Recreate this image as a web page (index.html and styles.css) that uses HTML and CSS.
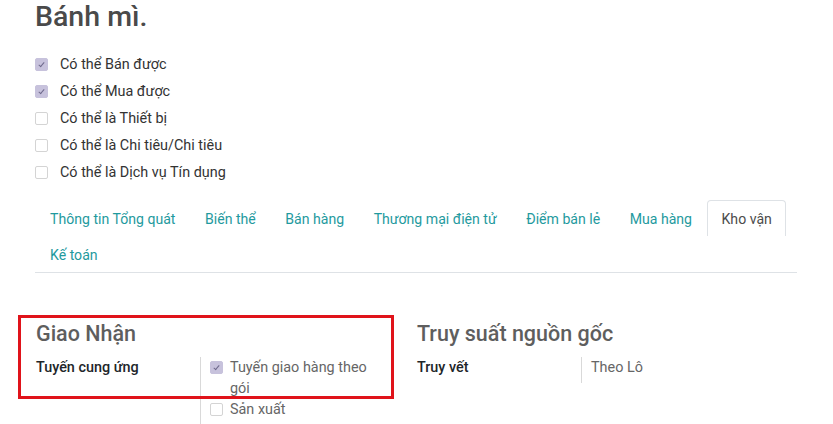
FILE: index.html
```html
<!DOCTYPE html>
<html lang="vi">
<head>
    <meta charset="UTF-8">
    <meta name="viewport" content="width=device-width, initial-scale=1.0">
    <title>Bánh mì.</title>
    <link rel="stylesheet" href="styles.css">
</head>
<body>
    <div class="sheet">
        <h1 class="product-name">Bánh mì.</h1>

        <ul class="options">
            <li><span class="check checked"></span>Có thể Bán được</li>
            <li><span class="check checked"></span>Có thể Mua được</li>
            <li><span class="check"></span>Có thể là Thiết bị</li>
            <li><span class="check"></span>Có thể là Chi tiêu/Chi tiêu</li>
            <li><span class="check"></span>Có thể là Dịch vụ Tín dụng</li>
        </ul>

        <ul class="tabs">
            <li>Thông tin Tổng quát</li>
            <li>Biến thể</li>
            <li>Bán hàng</li>
            <li>Thương mại điện tử</li>
            <li>Điểm bán lẻ</li>
            <li>Mua hàng</li>
            <li class="active">Kho vận</li>
            <li>Kế toán</li>
        </ul>

        <div class="groups">
            <div class="group">
                <h2>Giao Nhận</h2>
                <div class="field">
                    <div class="field-label">Tuyến cung ứng</div>
                    <div class="field-value">
                        <div class="route"><span class="check checked"></span><span>Tuyến giao hàng theo gói</span></div>
                        <div class="route"><span class="check"></span><span>Sản xuất</span></div>
                        <div class="route"><span class="check"></span></div>
                    </div>
                </div>
                <div class="highlight"></div>
            </div>
            <div class="group">
                <h2>Truy suất nguồn gốc</h2>
                <div class="field">
                    <div class="field-label">Truy vết</div>
                    <div class="field-value short">Theo Lô</div>
                </div>
            </div>
        </div>
    </div>
</body>
</html>
```

FILE: styles.css
```css
body {
    margin: 0;
    background: #fff;
    font-family: Roboto, "Noto Sans", sans-serif;
    font-size: 14.4px;
    color: #4c4c4c;
    overflow: hidden;
}
.sheet {
    padding: 0 36px 0 35px;
    width: 762px;
}
.product-name {
    margin: 0;
    font-size: 28.5px;
    font-weight: 500;
    line-height: 34px;
    color: #4a4a4a;
}
.options {
    list-style: none;
    margin: 17px 0 0;
    padding: 0;
}
.options li {
    display: flex;
    align-items: center;
    height: 27px;
    color: #333;
}
.check {
    flex: none;
    box-sizing: border-box;
    width: 13px;
    height: 13px;
    margin-right: 12px;
    border: 1px solid #d4d4d4;
    border-radius: 2px;
    background: #fff;
    position: relative;
}
.check.checked {
    border-color: #c7c2dc;
    background: #c7c2dc;
}
.check.checked::after {
    content: "";
    position: absolute;
    left: 4px;
    top: 2px;
    width: 2px;
    height: 5px;
    border: solid #6f6a8c;
    border-width: 0 1px 1px 0;
    transform: rotate(40deg);
}
.tabs {
    list-style: none;
    display: flex;
    flex-wrap: wrap;
    margin: 14px 0 0;
    padding: 0;
    border-bottom: 1px solid #dee2e6;
    font-size: 14.1px;
}
.tabs li {
    box-sizing: border-box;
    height: 36px;
    line-height: 36px;
    padding: 0 13.5px 0 14px;
    color: #1f9a9e;
    border: 1px solid transparent;
    border-bottom: 0;
    border-radius: 4px 4px 0 0;
}
.tabs li.active {
    color: #4c4c4c;
    border-color: #dee2e6;
    background: #fff;
}
.groups {
    display: grid;
    grid-template-columns: 381px 381px;
    margin-top: 43px;
}
.group {
    position: relative;
}
.group h2 {
    margin: 0 0 0 1px;
    font-size: 21.5px;
    font-weight: 500;
    line-height: 36px;
    color: #5e5e5e;
}
.field {
    display: flex;
    margin-top: 5px;
}
.field-label {
    width: 164px;
    padding-left: 1px;
    font-weight: 500;
    color: #212529;
    line-height: 21px;
}
.field-value {
    border-left: 1px solid #d9d9d9;
    padding-left: 9px;
    width: 165px;
    line-height: 21px;
    color: #666;
}
.field-value.short {
    height: 26px;
}
.route {
    display: flex;
    align-items: flex-start;
    min-height: 21px;
}
.route .check {
    margin-top: 4px;
    margin-right: 7px;
}
.highlight {
    position: absolute;
    left: -17px;
    top: -1px;
    box-sizing: border-box;
    width: 376px;
    height: 84px;
    border: 3px solid #e0131a;
}
```
